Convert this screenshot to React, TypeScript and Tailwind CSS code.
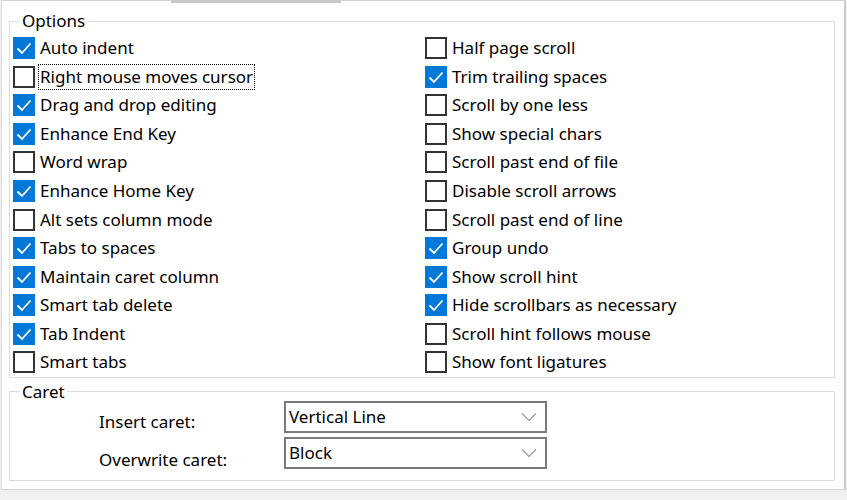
import React from 'react';

const left: [string, boolean][] = [
  ['Auto indent', true],
  ['Right mouse moves cursor', false],
  ['Drag and drop editing', true],
  ['Enhance End Key', true],
  ['Word wrap', false],
  ['Enhance Home Key', true],
  ['Alt sets column mode', false],
  ['Tabs to spaces', true],
  ['Maintain caret column', true],
  ['Smart tab delete', true],
  ['Tab Indent', true],
  ['Smart tabs', false],
];

const right: [string, boolean][] = [
  ['Half page scroll', false],
  ['Trim trailing spaces', true],
  ['Scroll by one less', false],
  ['Show special chars', false],
  ['Scroll past end of file', false],
  ['Disable scroll arrows', false],
  ['Scroll past end of line', false],
  ['Group undo', true],
  ['Show scroll hint', true],
  ['Hide scrollbars as necessary', true],
  ['Scroll hint follows mouse', false],
  ['Show font ligatures', false],
];

function Box({ checked }: { checked: boolean }) {
  if (checked) {
    return (
      <span className="w-[22px] h-[22px] bg-[#0078d7] flex items-center justify-center shrink-0">
        <svg width="18" height="18" viewBox="0 0 18 18">
          <path d="M2.5 9.5 L7 14 L15.5 4.5" fill="none" stroke="#fff" strokeWidth="1.8" />
        </svg>
      </span>
    );
  }
  return <span className="w-[22px] h-[22px] border-2 border-[#333333] bg-white shrink-0" />;
}

function Check({ label, checked, focused }: { label: string; checked: boolean; focused?: boolean }) {
  return (
    <div className="h-[28.55px] flex items-center">
      <Box checked={checked} />
      <span
        className={
          focused
            ? 'ml-[4px] px-[1px] leading-[24px] outline outline-1 outline-dotted outline-black'
            : 'ml-[5px] leading-[24px]'
        }
      >
        {label}
      </span>
    </div>
  );
}

function Select({ value }: { value: string }) {
  return (
    <div className="h-[32px] border-2 border-[#7a7a7a] bg-white flex items-center justify-between pl-[3px] pr-[8px]">
      <span>{value}</span>
      <svg width="16" height="10" viewBox="0 0 16 10">
        <path d="M1 1.5 L8 8.5 L15 1.5" fill="none" stroke="#9a9a9a" strokeWidth="1.2" />
      </svg>
    </div>
  );
}

export default function App() {
  return (
    <div
      className="w-[847px] h-[500px] bg-[#f0f0f0] text-[17px] text-black overflow-hidden"
      style={{ fontFamily: '"Noto Sans", "Liberation Sans", sans-serif' }}
    >
      <div className="w-[845px] h-[490px] bg-white border-l border-[#dadada] border-r-2 border-r-[#cccccc] border-b border-b-[#d4d4d4] ml-[1px] flex flex-col">
        <div className="h-[1px] bg-[#d4d4d4] flex">
          <div className="ml-[169px] w-[170px] h-[3px] bg-[#c8c8c8]" />
        </div>

        <fieldset className="ml-[7px] mr-[9px] mt-[8px] border border-[#dcdcdc]">
          <legend className="ml-[10px] px-[2px] leading-[24px]">Options</legend>
          <div className="grid grid-cols-[412px_1fr] pl-[3px] pt-[1px]">
            <div>
              {left.map(([l, c]) => (
                <Check key={l} label={l} checked={c} focused={l === 'Right mouse moves cursor'} />
              ))}
            </div>
            <div>
              {right.map(([l, c]) => (
                <Check key={l} label={l} checked={c} />
              ))}
            </div>
          </div>
        </fieldset>

        <fieldset className="ml-[7px] mr-[9px] mt-[5px] border border-[#dcdcdc] h-[98px]">
          <legend className="ml-[10px] px-[2px] leading-[18px]">Caret</legend>
          <div className="grid grid-cols-[185px_263px] grid-rows-[32px_32px] gap-y-[4px] pl-[89px]">
            <div className="pt-[9px] leading-[24px]">Insert caret:</div>
            <Select value="Vertical Line" />
            <div className="pt-[11px] leading-[24px]">Overwrite caret:</div>
            <Select value="Block" />
          </div>
        </fieldset>
      </div>
    </div>
  );
}
